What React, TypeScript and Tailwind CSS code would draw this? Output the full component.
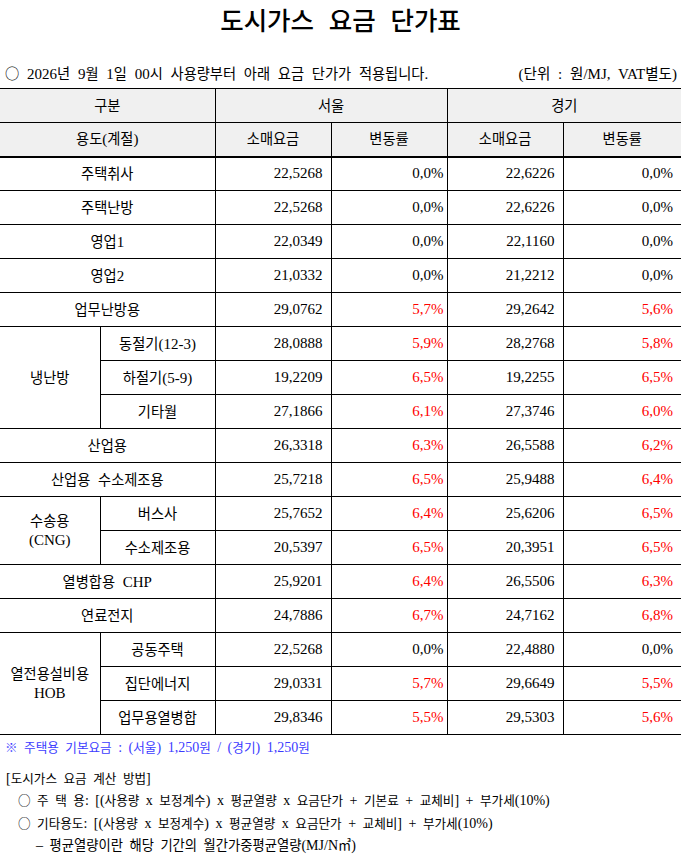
import React from "react";

const HANGUL = /([\uAC00-\uD7A3\u3131-\u318E\u25CB\u203B\u33A5]+)/;

function T({ s, k = "text-[0.9em]" }: { s: string; k?: string }) {
  const parts = s.split(HANGUL);
  return (
    <>
      {parts.map((p, i) =>
        HANGUL.test(p) ? (
          <span key={i} className={`font-['Noto_Sans_CJK_KR'] ${k}`}>
            {p}
          </span>
        ) : (
          <React.Fragment key={i}>{p}</React.Fragment>
        )
      )}
    </>
  );
}

function C({ s }: { s: string }) {
  return <T s={s} k="text-[0.95em]" />;
}

type Row = {
  label: string;
  group?: { text: string[]; span: number };
  inGroup?: boolean;
  s: string;
  sr: string;
  g: string;
  gr: string;
};

const rows: Row[] = [
  { label: "주택취사", s: "22,5268", sr: "0,0%", g: "22,6226", gr: "0,0%" },
  { label: "주택난방", s: "22,5268", sr: "0,0%", g: "22,6226", gr: "0,0%" },
  { label: "영업1", s: "22,0349", sr: "0,0%", g: "22,1160", gr: "0,0%" },
  { label: "영업2", s: "21,0332", sr: "0,0%", g: "21,2212", gr: "0,0%" },
  { label: "업무난방용", s: "29,0762", sr: "5,7%", g: "29,2642", gr: "5,6%" },
  { label: "동절기(12-3)", group: { text: ["냉난방"], span: 3 }, s: "28,0888", sr: "5,9%", g: "28,2768", gr: "5,8%" },
  { label: "하절기(5-9)", inGroup: true, s: "19,2209", sr: "6,5%", g: "19,2255", gr: "6,5%" },
  { label: "기타월", inGroup: true, s: "27,1866", sr: "6,1%", g: "27,3746", gr: "6,0%" },
  { label: "산업용", s: "26,3318", sr: "6,3%", g: "26,5588", gr: "6,2%" },
  { label: "산업용 수소제조용", s: "25,7218", sr: "6,5%", g: "25,9488", gr: "6,4%" },
  { label: "버스사", group: { text: ["수송용", "(CNG)"], span: 2 }, s: "25,7652", sr: "6,4%", g: "25,6206", gr: "6,5%" },
  { label: "수소제조용", inGroup: true, s: "20,5397", sr: "6,5%", g: "20,3951", gr: "6,5%" },
  { label: "열병합용 CHP", s: "25,9201", sr: "6,4%", g: "26,5506", gr: "6,3%" },
  { label: "연료전지", s: "24,7886", sr: "6,7%", g: "24,7162", gr: "6,8%" },
  { label: "공동주택", group: { text: ["열전용설비용", "HOB"], span: 3 }, s: "22,5268", sr: "0,0%", g: "22,4880", gr: "0,0%" },
  { label: "집단에너지", inGroup: true, s: "29,0331", sr: "5,7%", g: "29,6649", gr: "5,5%" },
  { label: "업무용열병합", inGroup: true, s: "29,8346", sr: "5,5%", g: "29,5303", gr: "5,6%" },
];

const cell = "border border-black h-[34px] p-0 align-middle";

function rate(v: string) {
  return v === "0,0%" ? "text-black" : "text-[#ff0000]";
}

export default function App() {
  return (
    <div className="w-[681px] bg-white text-black font-['Liberation_Serif',serif] text-[15px] leading-tight [word-spacing:4px]">
      <div className="h-[36px] flex items-center justify-center pt-[1px]">
        <h1 className="font-['Noto_Sans_CJK_KR',sans-serif] text-[25.5px] font-medium [word-spacing:9px] leading-none">
          도시가스 요금 단가표
        </h1>
      </div>
      <div className="h-[52px] flex items-end justify-between pl-[5px] pr-[4px] pb-[4px]">
        <div>
          <T s="○ 2026년 9월 1일 00시 사용량부터 아래 요금 단가가 적용됩니다." k="text-[0.95em]" />
        </div>
        <div>
          <T s="(단위 : 원/MJ, VAT별도)" k="text-[0.97em]" />
        </div>
      </div>
      <table className="w-[681px] border-collapse table-fixed">
        <colgroup>
          <col className="w-[100px]" />
          <col className="w-[115px]" />
          <col className="w-[116px]" />
          <col className="w-[116px]" />
          <col className="w-[116px]" />
          <col className="w-[118px]" />
        </colgroup>
        <thead>
          <tr className="bg-[#f0f0f0]">
            <th colSpan={2} className={`${cell} border-l-0 font-normal text-center`}>
              <C s="구분" />
            </th>
            <th colSpan={2} className={`${cell} font-normal text-center`}>
              <C s="서울" />
            </th>
            <th colSpan={2} className={`${cell} border-r-0 font-normal text-center`}>
              <C s="경기" />
            </th>
          </tr>
          <tr className="bg-[#f0f0f0]">
            <th colSpan={2} className={`${cell} border-l-0 border-b-2 font-normal text-center`}>
              <C s="용도(계절)" />
            </th>
            <th className={`${cell} border-b-2 font-normal text-center`}>
              <C s="소매요금" />
            </th>
            <th className={`${cell} border-b-2 font-normal text-center`}>
              <C s="변동률" />
            </th>
            <th className={`${cell} border-b-2 font-normal text-center`}>
              <C s="소매요금" />
            </th>
            <th className={`${cell} border-r-0 border-b-2 font-normal text-center`}>
              <C s="변동률" />
            </th>
          </tr>
        </thead>
        <tbody>
          {rows.map((r, i) => {
            const isSub = !!r.group || !!r.inGroup;
            return (
              <tr key={i}>
                {r.group && (
                  <td rowSpan={r.group.span} className={`${cell} border-l-0 text-center`}>
                    {r.group.text.map((t, j) => (
                      <div key={j}>
                        <C s={t} />
                      </div>
                    ))}
                  </td>
                )}
                {isSub ? (
                  <td className={`${cell} text-center`}>
                    <C s={r.label} />
                  </td>
                ) : (
                  <td colSpan={2} className={`${cell} border-l-0 text-center`}>
                    <C s={r.label} />
                  </td>
                )}
                <td className={`${cell} text-right pr-[8px]`}>{r.s}</td>
                <td className={`${cell} text-right pr-[3px] ${rate(r.sr)}`}>{r.sr}</td>
                <td className={`${cell} text-right pr-[8px]`}>{r.g}</td>
                <td className={`${cell} border-r-0 text-right pr-[8px] ${rate(r.gr)}`}>{r.gr}</td>
              </tr>
            );
          })}
        </tbody>
      </table>
      <div className="text-[14px] [word-spacing:3px]">
        <div className="pl-[5px] pt-[4px] text-[#3c3cff]">
          <T s="※ 주택용 기본요금 : (서울) 1,250원 / (경기) 1,250원" />
        </div>
        <div className="pl-[6px] pt-[13px] flex flex-col gap-[5px]">
          <div>
            <T s="[도시가스 요금 계산 방법]" />
          </div>
          <div className="pl-[12px]">
            <T s="○ 주 택 용: [(사용량 x 보정계수) x 평균열량 x 요금단가 + 기본료 + 교체비] + 부가세(10%)" />
          </div>
          <div className="pl-[12px]">
            <T s="○ 기타용도: [(사용량 x 보정계수) x 평균열량 x 요금단가 + 교체비] + 부가세(10%)" />
          </div>
          <div className="pl-[30px]">
            <T s="– 평균열량이란 해당 기간의 월간가중평균열량(MJ/N㎥)" k="text-[0.95em]" />
          </div>
        </div>
      </div>
    </div>
  );
}
